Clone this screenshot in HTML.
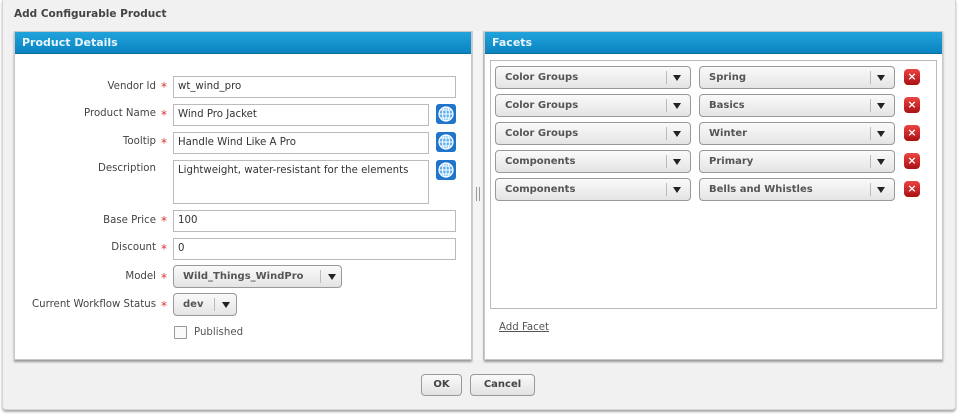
<!DOCTYPE html>
<html><head><style>
*{box-sizing:border-box}
body{margin:0;width:958px;height:414px;background:#fff;font-family:"DejaVu Sans",Verdana,sans-serif;font-size:10.2px;color:#333;position:relative;overflow:hidden}
.abs{position:absolute}
.dlg{left:2px;top:0;width:954px;height:410px;background:#f1f1f1;border:1px solid #d6d6d6;border-top:none;border-radius:0 0 4px 4px;box-shadow:0 2px 2px #aaa}
.title{left:14px;top:8px;font-weight:bold;color:#444;font-size:10.5px}
.panel{background:#fff;border:1px solid #c8c8c8;box-shadow:0 2px 2px #999}
.hdr{left:0;top:0;right:0;height:22px;background:linear-gradient(#22a3dc,#0a84c0);color:#e8f6ff;font-weight:bold;font-size:11px;padding:4px 7px;border-bottom:1px solid #0a6fa0}
.lbl{text-align:right;width:150px;left:6px;color:#444}
.star{color:#d33;font-size:12px}
.inp{border:1px solid #bbb;background:#fff;padding:4px 4px;color:#333;height:22px}
.sel{height:23px;border:1px solid #999;border-radius:4px;background:linear-gradient(#fafafa,#e4e4e4);font-weight:bold;color:#555;padding:5px 9px;font-size:10px}
.sel .sep{position:absolute;top:4px;bottom:4px;width:1px;background:#bbb}
.sel .arr{position:absolute;top:8px;width:0;height:0;border-left:4px solid transparent;border-right:4px solid transparent;border-top:6px solid #222}
.x{width:16px;height:16px;border-radius:4px;background:linear-gradient(#e44,#a11);color:#fff;font-weight:bold;font-size:11px;text-align:center;line-height:16px}
.btn{height:22px;border:1px solid #999;border-radius:4px;background:linear-gradient(#fafafa,#e2e2e2);font-weight:bold;color:#444;text-align:center;line-height:20px;font-size:10px}
</style></head><body>
<div class="abs dlg"></div>
<div class="abs title">Add Configurable Product</div>

<div class="abs panel" style="left:14px;top:31px;width:458px;height:329px">
 <div class="abs hdr">Product Details</div>
</div>
<div class="abs" style="left:472px;top:31px;width:12px;height:329px;background:#f4f4f4;border-left:1px solid #ccc;border-right:1px solid #ccc"></div>
<div class="abs" style="left:476px;top:187px;width:1px;height:14px;background:#999"></div>
<div class="abs" style="left:479px;top:187px;width:1px;height:14px;background:#999"></div>

<div class="abs lbl" style="top:81px">Vendor Id</div><div class="abs star" style="left:161px;top:80px">*</div>
<div class="abs inp" style="left:173px;top:76px;width:283px">wt_wind_pro</div>
<div class="abs lbl" style="top:108px">Product Name</div><div class="abs star" style="left:161px;top:108px">*</div>
<div class="abs inp" style="left:173px;top:104px;width:256px">Wind Pro Jacket</div>
<div class="abs lbl" style="top:136px">Tooltip</div><div class="abs star" style="left:161px;top:136px">*</div>
<div class="abs inp" style="left:173px;top:132px;width:256px">Handle Wind Like A Pro</div>
<div class="abs lbl" style="top:163px">Description</div>
<div class="abs inp" style="left:173px;top:160px;width:256px;height:44px">Lightweight, water-resistant for the elements</div>
<svg class="abs" style="left:436px;top:104px" width="20" height="100">
 <g id="g"><rect x="0" y="0" width="20" height="20" rx="3" fill="#1f74cc"/><circle cx="10" cy="10" r="7" fill="#5cb0f0" stroke="#fff" stroke-width="1.2"/><path d="M3 10h14M10 3v14M5 6h10M5 14h10" stroke="#fff" stroke-width="1" fill="none"/><ellipse cx="10" cy="10" rx="3.5" ry="7" fill="none" stroke="#fff" stroke-width="1"/></g>
 <use href="#g" y="28"/><use href="#g" y="56"/>
</svg>
<div class="abs lbl" style="top:215px">Base Price</div><div class="abs star" style="left:161px;top:214px">*</div>
<div class="abs inp" style="left:173px;top:210px;width:283px">100</div>
<div class="abs lbl" style="top:242px">Discount</div><div class="abs star" style="left:161px;top:242px">*</div>
<div class="abs inp" style="left:173px;top:238px;width:283px">0</div>
<div class="abs lbl" style="top:271px">Model</div><div class="abs star" style="left:161px;top:271px">*</div>
<div class="abs sel" style="left:173px;top:265px;width:169px">Wild_Things_WindPro<span class="sep" style="left:146px"></span><span class="arr" style="left:154px"></span></div>
<div class="abs lbl" style="top:299px">Current Workflow Status</div><div class="abs star" style="left:161px;top:299px">*</div>
<div class="abs sel" style="left:173px;top:293px;width:64px">dev<span class="sep" style="left:40px"></span><span class="arr" style="left:48px"></span></div>
<div class="abs" style="left:174px;top:326px;width:13px;height:13px;border:1px solid #999;background:#fafafa;border-radius:1px"></div>
<div class="abs" style="left:194px;top:327px;color:#555">Published</div>

<div class="abs panel" style="left:484px;top:31px;width:459px;height:329px">
 <div class="abs hdr">Facets</div>
 <div class="abs" style="left:5px;top:28px;width:447px;height:249px;border:1px solid #bbb"></div>
</div>
<div class="abs sel" style="left:495px;top:66px;width:196px">Color Groups<span class="sep" style="left:170px"></span><span class="arr" style="left:177px"></span></div>
<div class="abs sel" style="left:699px;top:66px;width:196px">Spring<span class="sep" style="left:170px"></span><span class="arr" style="left:177px"></span></div>
<div class="abs x" style="left:904px;top:69px">×</div>
<div class="abs sel" style="left:495px;top:94px;width:196px">Color Groups<span class="sep" style="left:170px"></span><span class="arr" style="left:177px"></span></div>
<div class="abs sel" style="left:699px;top:94px;width:196px">Basics<span class="sep" style="left:170px"></span><span class="arr" style="left:177px"></span></div>
<div class="abs x" style="left:904px;top:97px">×</div>
<div class="abs sel" style="left:495px;top:122px;width:196px">Color Groups<span class="sep" style="left:170px"></span><span class="arr" style="left:177px"></span></div>
<div class="abs sel" style="left:699px;top:122px;width:196px">Winter<span class="sep" style="left:170px"></span><span class="arr" style="left:177px"></span></div>
<div class="abs x" style="left:904px;top:125px">×</div>
<div class="abs sel" style="left:495px;top:150px;width:196px">Components<span class="sep" style="left:170px"></span><span class="arr" style="left:177px"></span></div>
<div class="abs sel" style="left:699px;top:150px;width:196px">Primary<span class="sep" style="left:170px"></span><span class="arr" style="left:177px"></span></div>
<div class="abs x" style="left:904px;top:153px">×</div>
<div class="abs sel" style="left:495px;top:178px;width:196px">Components<span class="sep" style="left:170px"></span><span class="arr" style="left:177px"></span></div>
<div class="abs sel" style="left:699px;top:178px;width:196px">Bells and Whistles<span class="sep" style="left:170px"></span><span class="arr" style="left:177px"></span></div>
<div class="abs x" style="left:904px;top:181px">×</div>
<div class="abs" style="left:499px;top:322px;color:#555;text-decoration:underline">Add Facet</div>

<div class="abs btn" style="left:421px;top:374px;width:41px">OK</div>
<div class="abs btn" style="left:470px;top:374px;width:65px">Cancel</div>
</body></html>
